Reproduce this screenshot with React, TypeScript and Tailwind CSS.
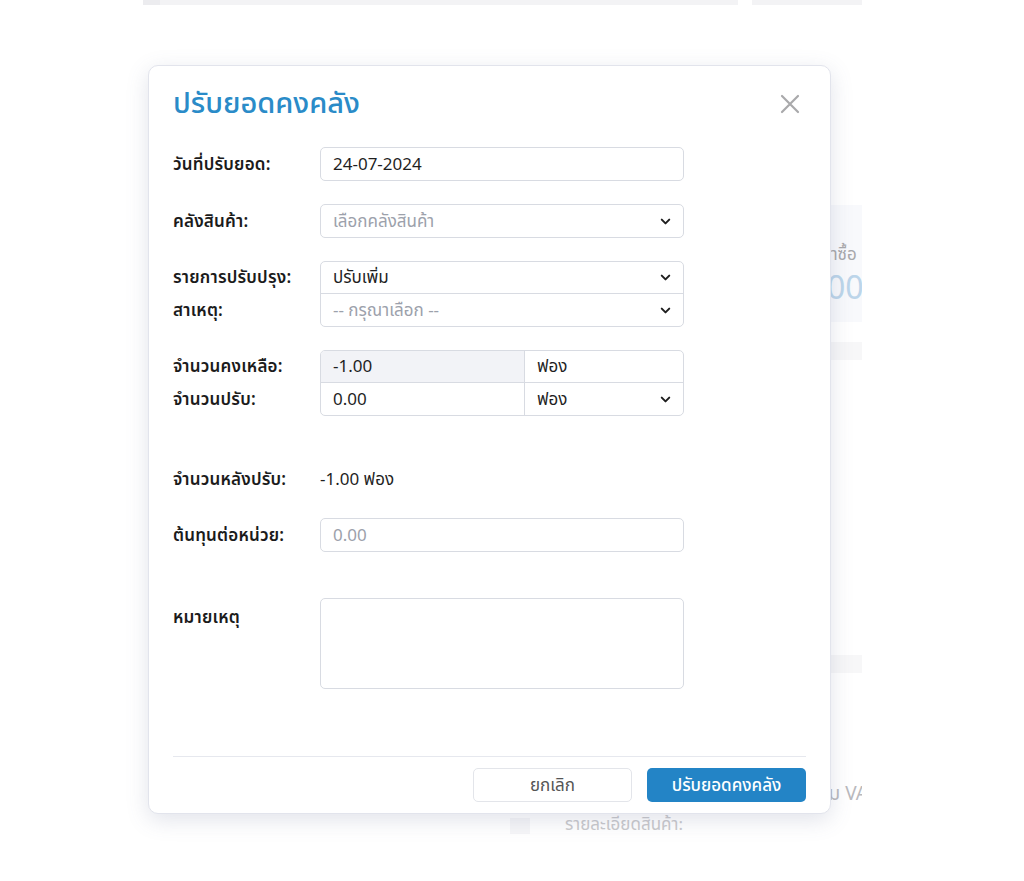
import { ChevronDown } from "lucide-react";

const font = { fontFamily: '"Noto Sans Thai", Roboto, "Noto Sans", sans-serif' };

function Chevron() {
  return <ChevronDown size={15} strokeWidth={3.2} className="-mt-[3px] text-[#1f1f1f]" />;
}

function Label({ children }: { children: React.ReactNode }) {
  return <div className="w-[147px] shrink-0 pt-[3px] text-[17px] font-semibold tracking-[0.2px] text-[#1b1b1b]">{children}</div>;
}

function Background() {
  return (
    <div className="flex min-h-[881px] bg-white pl-[143px]">
      <div className="flex w-[595px] flex-col">
        <div className="h-[5px] w-full bg-[#f3f3f5]">
          <div className="h-full w-[17px] bg-[#ececef]" />
        </div>
        <div className="mt-[808px] flex items-center gap-[35px] pl-[367px]">
          <div className="h-[16px] w-[20px] bg-[#f6f6f8]" />
          <span className="text-[17px] text-[#c9c9cc]">รายละเอียดสินค้า:</span>
        </div>
      </div>
      <div className="ml-[14px] flex w-[110px] flex-col overflow-hidden">
        <div className="h-[5px] w-full bg-[#f3f3f5]" />
        <div className="mt-[200px] flex h-[117px] flex-col bg-[#f8f9fc] pt-[38px]">
          <span className="whitespace-nowrap pl-[53px] text-[17px] text-[#a8a8ab]">ราคาซื้อ</span>
          <span className="mt-[2px] whitespace-nowrap pl-[48px] text-[32px] leading-[36px] text-[#bcd5ea]">0.00</span>
        </div>
        <div className="mt-[20px] h-[18px] w-full bg-[#f7f7f8]" />
        <div className="mt-[295px] h-[18px] w-full bg-[#f7f7f8]" />
        <div className="mt-[108px] whitespace-nowrap pl-[58px] text-[19px] text-[#b9b9bd]">รวม VAT</div>
      </div>
    </div>
  );
}

export default function App() {
  return (
    <div className="relative min-h-[881px] w-[1024px] overflow-hidden" style={font}>
      <Background />
      <div className="absolute inset-0 pl-[148px] pt-[65px]">
        <div className="flex h-[749px] w-[683px] flex-col rounded-[10px] border border-[#e2e4ec] bg-white px-6 pt-[19px] shadow-[0_6px_22px_rgba(90,100,140,0.18)]">
          <div className="flex items-center justify-between">
            <h1 className="text-[29px] leading-[38px] font-medium text-[#2a8bc8]">ปรับยอดคงคลัง</h1>
            <svg width="20" height="20" viewBox="0 0 20 20" className="mr-[6px]">
              <path d="M2 2 L18 18 M18 2 L2 18" stroke="#a9a9ab" strokeWidth="2.2" strokeLinecap="round" />
            </svg>
          </div>

          <div className="mt-[24px] flex items-center">
            <Label>วันที่ปรับยอด:</Label>
            <div className="flex h-[34px] w-[364px] items-center rounded-[5px] border border-[#d8dbe2] px-3 pt-[3px] text-[17px] text-[#1f1f1f]">
              24-07-2024
            </div>
          </div>

          <div className="mt-[23px] flex items-center">
            <Label>คลังสินค้า:</Label>
            <div className="flex h-[34px] w-[364px] items-center justify-between rounded-[5px] border border-[#d8dbe2] pl-3 pr-[10px] pt-[3px] text-[17px] text-[#9ca1ab]">
              เลือกคลังสินค้า
              <Chevron />
            </div>
          </div>

          <div className="mt-[23px] flex">
            <div className="flex w-[147px] shrink-0 flex-col">
              <div className="flex h-[33px] items-center"><Label>รายการปรับปรุง:</Label></div>
              <div className="flex h-[33px] items-center"><Label>สาเหตุ:</Label></div>
            </div>
            <div className="flex w-[364px] flex-col rounded-[5px] border border-[#d8dbe2]">
              <div className="flex h-[32px] items-center justify-between border-b border-[#d8dbe2] pl-3 pr-[10px] pt-[3px] text-[17px] text-[#1f1f1f]">
                ปรับเพิ่ม
                <Chevron />
              </div>
              <div className="flex h-[32px] items-center justify-between pl-3 pr-[10px] pt-[3px] text-[17px] text-[#9ca1ab]">
                -- กรุณาเลือก --
                <Chevron />
              </div>
            </div>
          </div>

          <div className="mt-[23px] flex">
            <div className="flex w-[147px] shrink-0 flex-col">
              <div className="flex h-[33px] items-center"><Label>จำนวนคงเหลือ:</Label></div>
              <div className="flex h-[33px] items-center"><Label>จำนวนปรับ:</Label></div>
            </div>
            <div className="grid w-[364px] grid-cols-[204px_1fr] overflow-hidden rounded-[5px] border border-[#d8dbe2] text-[17px] text-[#1f1f1f]">
              <div className="flex h-[32px] items-center border-b border-r border-[#d8dbe2] bg-[#f2f3f7] px-3 pt-[3px]">-1.00</div>
              <div className="flex h-[32px] items-center border-b border-[#d8dbe2] px-3 pt-[3px]">ฟอง</div>
              <div className="flex h-[32px] items-center border-r border-[#d8dbe2] px-3 pt-[3px]">0.00</div>
              <div className="flex h-[32px] items-center justify-between pl-3 pr-[10px] pt-[3px]">
                ฟอง
                <Chevron />
              </div>
            </div>
          </div>

          <div className="mt-[46px] flex h-[34px] items-center">
            <Label>จำนวนหลังปรับ:</Label>
            <span className="pt-[3px] text-[17px] text-[#1f1f1f]">-1.00 ฟอง</span>
          </div>

          <div className="mt-[22px] flex items-center">
            <Label>ต้นทุนต่อหน่วย:</Label>
            <div className="flex h-[34px] w-[364px] items-center rounded-[5px] border border-[#d8dbe2] px-3 pt-[3px] text-[17px] text-[#9ca1ab]">
              0.00
            </div>
          </div>

          <div className="mt-[46px] flex">
            <div className="pt-[5px]"><Label>หมายเหตุ</Label></div>
            <div className="h-[91px] w-[364px] rounded-[5px] border border-[#d8dbe2]" />
          </div>

          <div className="mt-auto border-t border-[#e6e8ee] pb-[11px] pt-[11px]">
            <div className="flex justify-end gap-[15px]">
              <button className="h-[34px] w-[159px] rounded-[5px] border border-[#e3e5ea] bg-white pt-[3px] text-[17px] text-[#555]">
                ยกเลิก
              </button>
              <button className="h-[34px] w-[159px] rounded-[5px] bg-[#2384c6] pt-[3px] text-[17px] font-medium text-white">
                ปรับยอดคงคลัง
              </button>
            </div>
          </div>
        </div>
      </div>
    </div>
  );
}
